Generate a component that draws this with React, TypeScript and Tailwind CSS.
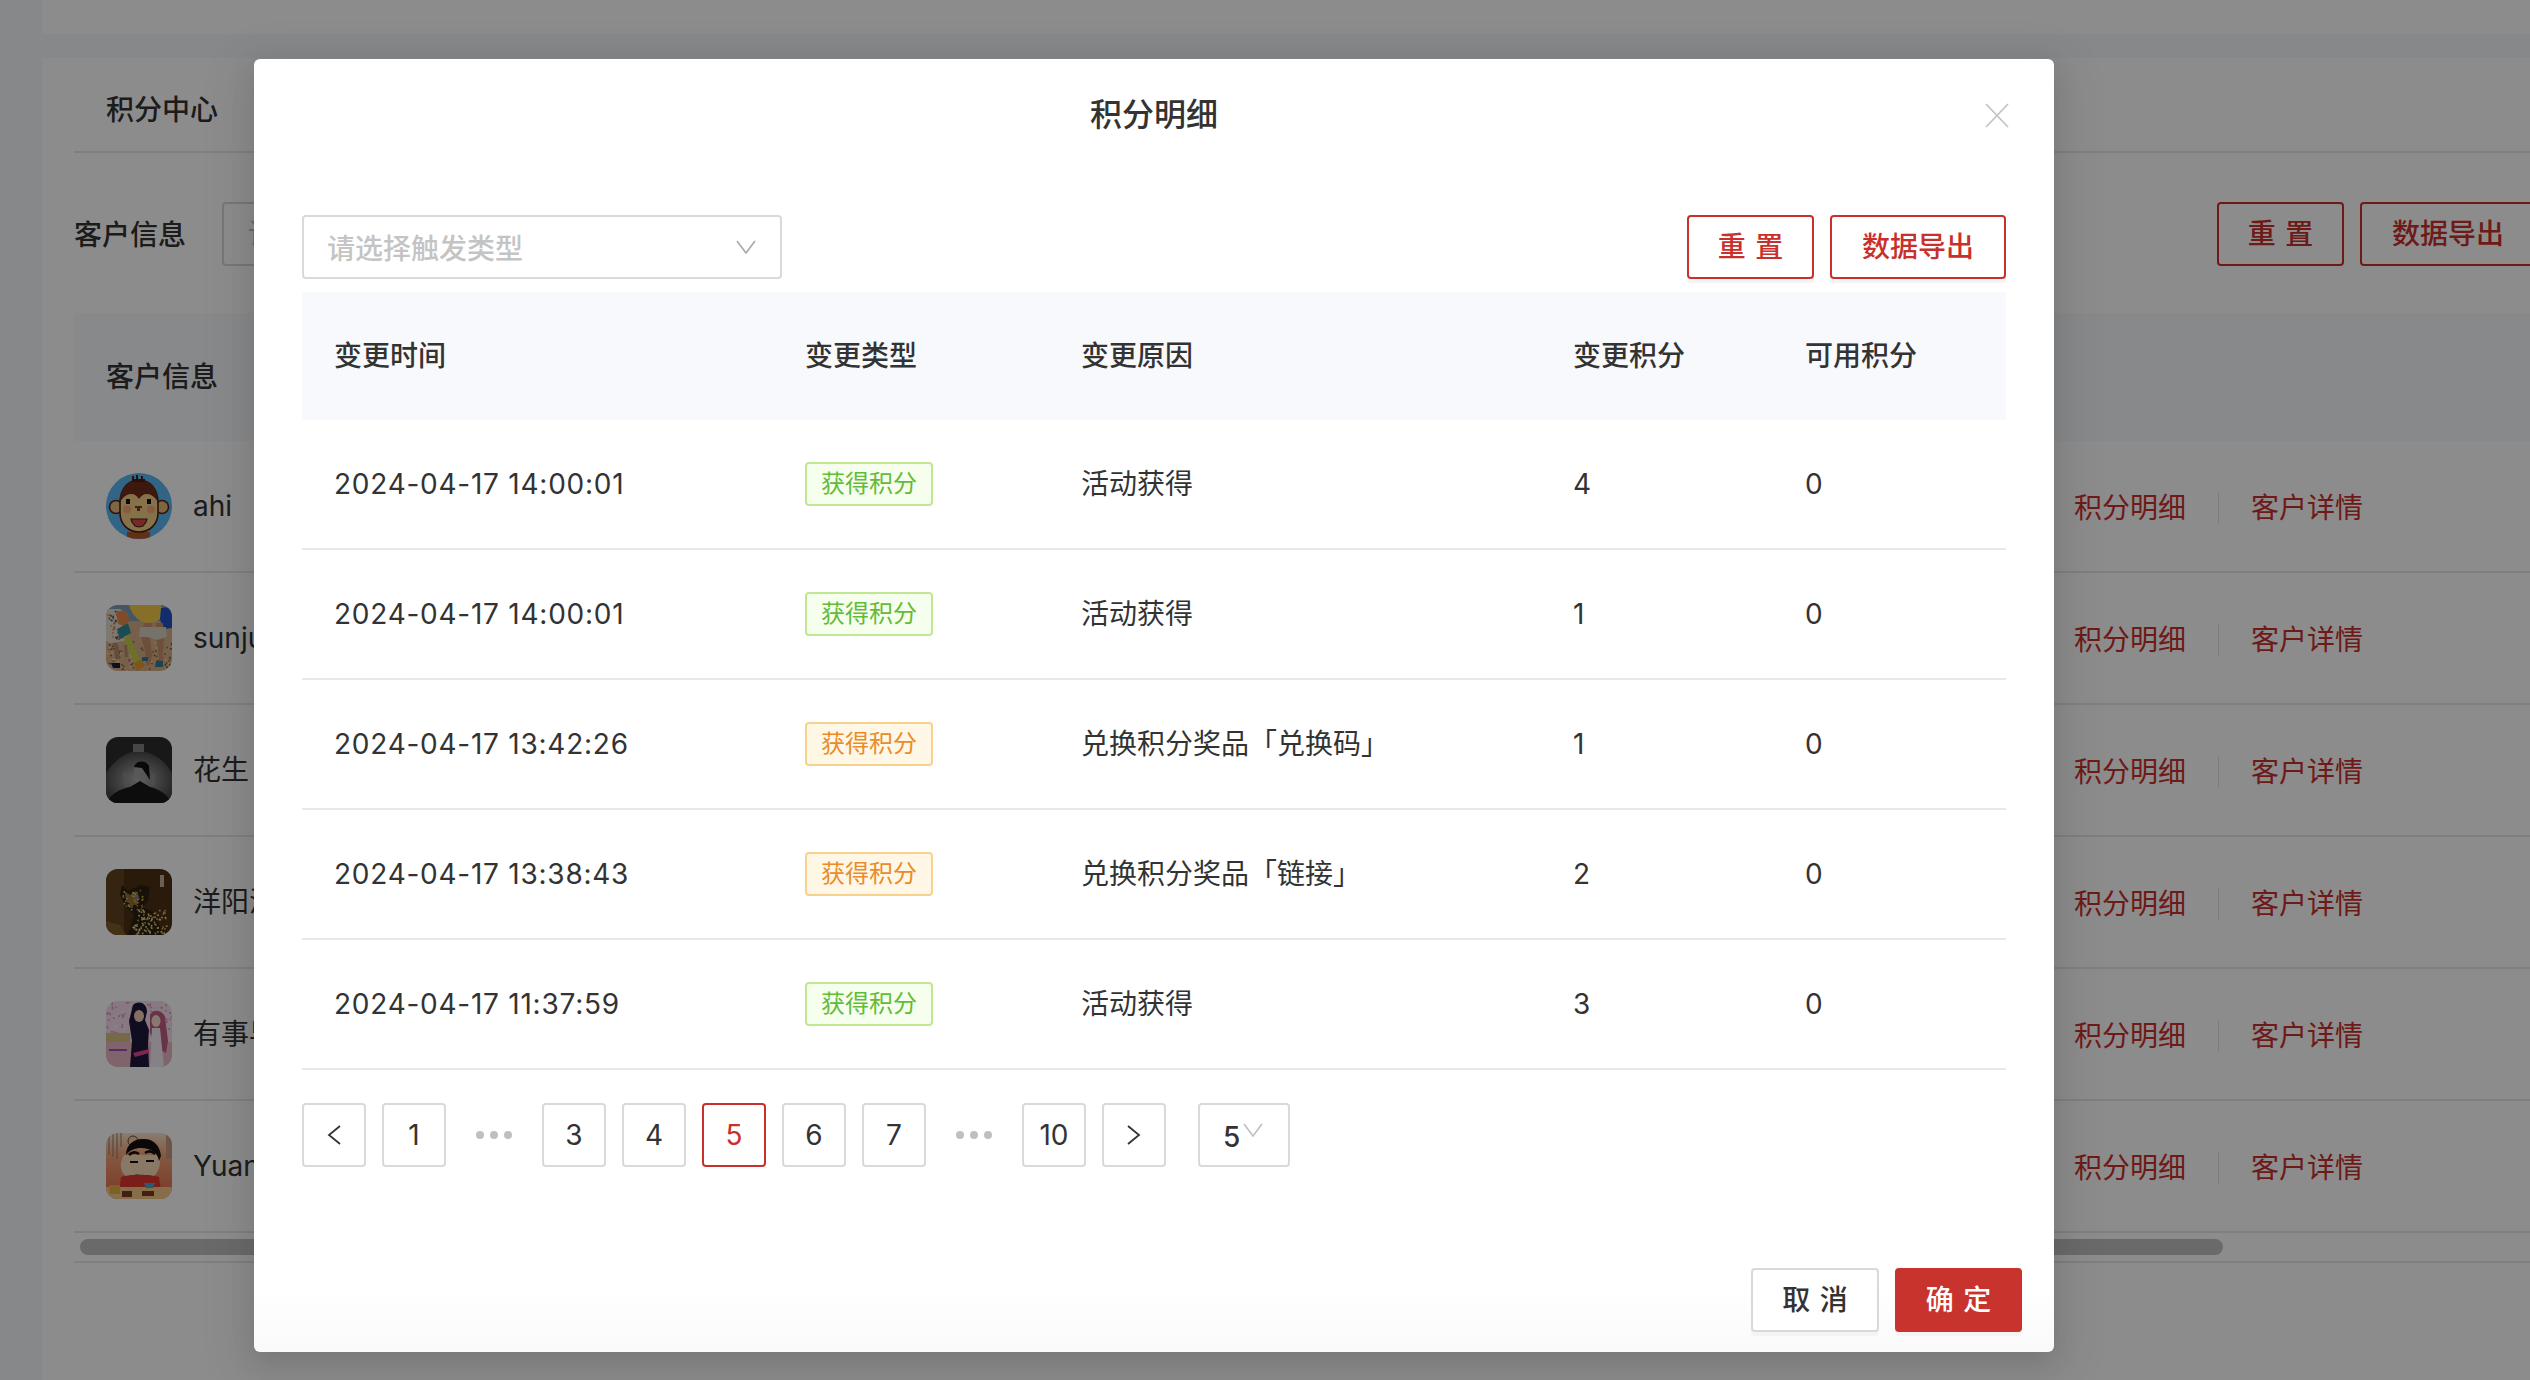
import React from "react";

const font = { fontFamily: 'Inter, "Noto Sans CJK SC", sans-serif' };

function Chevron({ className }: { className: string }) {
  return (
    <svg className={className} viewBox="0 0 20 14" fill="none" stroke="currentColor" strokeWidth="1.6">
      <path d="M1 1l9 12 9-12" />
    </svg>
  );
}

// little flecks of colour so the photo avatars don't read as flat shapes
function Specks({ seed, colors, x, y, w, h, n }: { seed: number; colors: string[]; x: number; y: number; w: number; h: number; n: number }) {
  let s = seed;
  const next = () => {
    s = (s * 9301 + 49297) % 233280;
    return s / 233280;
  };
  const items = Array.from({ length: n }, (_, i) => ({
    key: i,
    x: x + next() * w,
    y: y + next() * h,
    fill: colors[Math.floor(next() * colors.length)],
  }));
  return (
    <>
      {items.map((p) => (
        <rect key={p.key} x={p.x} y={p.y} width="1.6" height="1.6" fill={p.fill} />
      ))}
    </>
  );
}

function Monkey() {
  return (
    <svg viewBox="0 0 66 66" className="h-[66px] w-[66px] rounded-full">
      <rect width="66" height="66" fill="#5cb6f2" />
      <path d="M21 59h23v7H21z" fill="#b0582a" />
      <circle cx="10" cy="34" r="6.5" fill="#e8b878" stroke="#5c2416" strokeWidth="1.6" />
      <circle cx="56" cy="34" r="6.5" fill="#e8b878" stroke="#5c2416" strokeWidth="1.6" />
      <path d="M14 30c0-14 8-23 19-23s19 9 19 23v10c0 11-8 19-19 19S14 51 14 40z" fill="#f4d088" stroke="#4c1e12" strokeWidth="1.6" />
      <path d="M14 29c0-14 8-22 19-22s19 8 19 22c-3-5-7-8-11-8-4 0-6 2-8 5-2-3-4-5-8-5-4 0-8 3-11 8z" fill="#6e2c1c" />
      <path d="M26 6V3h2v3h2V2h2v4h3V3h2v3h2v3H26z" fill="#4c1e12" />
      <rect x="20" y="26" width="4" height="5" fill="#140e0a" />
      <rect x="41" y="26" width="4" height="5" fill="#140e0a" />
      <circle cx="21" cy="36.5" r="4" fill="#f4a878" />
      <circle cx="45" cy="36.5" r="4" fill="#f4a878" />
      <path d="M29 33h7v2h-2v3h-3v-3h-2z" fill="#7c3c24" />
      <path d="M25 46h16l-1 3-3 4-4 1-4-1-3-4z" fill="#d84c48" stroke="#4c1e12" strokeWidth="1.2" />
    </svg>
  );
}

function Sand() {
  return (
    <svg viewBox="0 0 66 66" className="h-[66px] w-[66px] rounded-[12px]">
      <rect width="66" height="66" fill="#d8b088" />
      <rect width="66" height="16" fill="#7c9cb8" />
      <Specks seed={11} colors={["#8c6844", "#f0d8b8", "#6c5038"]} x={0} y={36} w={66} h={30} n={90} />
      <path d="M23 0h32l3 8c-2 6-8 10-16 10-9 0-16-8-19-18z" fill="#f4cc48" />
      <path d="M55 3l11-1v21l-9 1-3-10z" fill="#2450c8" />
      <path d="M38 18h8l-2 14 2 18-2 10h-4l-1-14-4-14zM50 18h7l1 14-1 18 1 6h-5l-1-12-3-14z" fill="#c89070" />
      <path d="M34 22h26l1 10-10 3-10-3-8 0z" fill="#d8d0c0" />
      <path d="M0 4h14l8 6 1 14-5 12-14 2-4-2z" fill="#e4dccc" />
      <Specks seed={5} colors={["#c05830", "#3c4c68", "#e88a48"]} x={1} y={5} w={20} h={30} n={50} />
      <path d="M10 6h10l4 10-6 5-6-2z" fill="#e88a48" />
      <path d="M11 24l11-6 3 10-11 6z" fill="#2c8c98" />
      <path d="M18 33l5-2 12 27-5 3z" fill="#c4d040" />
      <path d="M28 58l8-4 3 7-8 5z" fill="#e89c30" />
      <path d="M8 38h4l2 16H9zM18 40h3l1 12h-3z" fill="#b48c68" />
      <path d="M5 58h9v5H7z" fill="#141c3c" />
      <path d="M50 56h7v6h-8z" fill="#2c7c9c" />
      <path d="M36 52h6v4h-6z" fill="#2c7c9c" />
    </svg>
  );
}

function Mono() {
  return (
    <svg viewBox="0 0 66 66" className="h-[66px] w-[66px] rounded-[12px]">
      <defs>
        <radialGradient id="dome" cx="50%" cy="55%" r="60%">
          <stop offset="0" stopColor="#b0b0b0" />
          <stop offset="1" stopColor="#3c3c3c" />
        </radialGradient>
      </defs>
      <rect width="66" height="66" fill="#2c2c2c" />
      <path d="M0 36C10 21 22 14 33 14s24 7 33 22v30H0z" fill="url(#dome)" />
      <rect x="27" y="7" width="11" height="8" fill="#808080" />
      <path d="M0 66c6-10 14-14 24-16l10-6 10 6c8 2 16 6 22 16z" fill="#181818" />
      <ellipse cx="35" cy="35" rx="7" ry="9" fill="#a0a0a0" />
      <path d="M28 30c2-7 12-7 15-1l1 14-8-12z" fill="#121212" />
      <path d="M17 36l3-1 2 14-3 2zM46 36l3 2-1 12-3-2z" fill="#8c8c8c" />
    </svg>
  );
}

function Rat() {
  return (
    <svg viewBox="0 0 66 66" className="h-[66px] w-[66px] rounded-[12px]">
      <rect width="66" height="66" fill="#4c3016" />
      <rect width="18" height="66" fill="#6c4a20" opacity=".7" />
      <path d="M16 16l6 6 12-6 10 2-2 14-6 6 10 4 12 24H22l6-20-8-8-6-12z" fill="#2a2010" />
      <path d="M18 22l6 4 6-4 4 8-8 8-6-8z" fill="#8c7038" />
      <Specks seed={23} colors={["#e8c878", "#c8a050", "#f0dc98"]} x={26} y={40} w={34} h={26} n={90} />
      <Specks seed={41} colors={["#a88848", "#d8b868"]} x={16} y={18} w={22} h={22} n={40} />
      <circle cx="31" cy="27" r="1.6" fill="#4c90e0" />
      <rect x="54" y="6" width="4" height="12" fill="#d8d0b8" opacity=".8" />
      <path d="M0 66V52l14 4 6 10z" fill="#7c5a28" />
    </svg>
  );
}

function Couple() {
  return (
    <svg viewBox="0 0 66 66" className="h-[66px] w-[66px] rounded-[12px]">
      <rect width="66" height="66" fill="#f4dcec" />
      <Specks seed={7} colors={["#e098c8", "#d880b8", "#fff0f8"]} x={0} y={0} w={66} h={34} n={90} />
      <rect y="32" width="24" height="9" fill="#d8c088" />
      <rect y="41" width="66" height="25" fill="#e8b8c4" />
      <path d="M27 4c6-5 14-2 14 7l-2 8 4 10-1 14 1 23H24l2-26-3-20z" fill="#20183c" />
      <ellipse cx="33" cy="15" rx="5" ry="6" fill="#f0ccb4" />
      <path d="M27 52l16-4v4l-14 4z" fill="#e84898" />
      <path d="M44 14c2-6 12-6 15 2l3 24-2 12-8-4-8-16z" fill="#c05c80" />
      <ellipse cx="50" cy="20" rx="4.5" ry="6" fill="#f8dccc" />
      <path d="M46 27h8l4 39H44z" fill="#f4ecf4" />
      <path d="M3 48h18v2H3z" fill="#a848b8" />
    </svg>
  );
}

function Shin() {
  return (
    <svg viewBox="0 0 66 66" className="h-[66px] w-[66px] rounded-[12px]">
      <defs>
        <linearGradient id="wall" x1="0" y1="0" x2="0" y2="1">
          <stop offset="0" stopColor="#f8e4cc" />
          <stop offset=".35" stopColor="#f0a078" />
          <stop offset="1" stopColor="#e06844" />
        </linearGradient>
      </defs>
      <rect width="66" height="66" fill="url(#wall)" />
      <path d="M3 0v22M7 0v24M11 0v26M15 0v14" stroke="#907868" strokeWidth="1" />
      <path d="M60 0h6v26h-6z" fill="#c89880" />
      <circle cx="27" cy="8" r="5" fill="#f4cca4" stroke="#3c2c20" strokeWidth=".8" />
      <path d="M18 22c-5 8-4 17 2 21 8 4 22 4 29-1 4-4 6-12 5-20z" fill="#f8dcbc" />
      <path d="M20 22c0-12 10-17 18-16 9 0 16 6 17 17l-2 5c-1-8-8-13-18-13-6 0-11 2-15 7z" fill="#14100e" />
      <path d="M23 22c3-3 7-3 10-1M39 20c3-2 7-2 10 1" stroke="#14100e" strokeWidth="2.6" fill="none" />
      <path d="M24 29h8M40 28h8" stroke="#14100e" strokeWidth="1.8" />
      <path d="M29 42h4" stroke="#5c4030" strokeWidth="1" />
      <path d="M15 44c8-3 30-3 38 0l2 14H13z" fill="#e03830" />
      <path d="M0 54h66v12H0z" fill="#f4c888" />
      <path d="M38 50h11l-2 5h-7z" fill="#4ca4d8" />
      <path d="M3 52h11v9H4z" fill="#e4b040" />
      <path d="M16 58h10v6H16zM36 58h12v5H36z" fill="#7c3820" />
    </svg>
  );
}

const rows = [
  { avatar: <Monkey />, name: "ahi" },
  { avatar: <Sand />, name: "sunjun" },
  { avatar: <Mono />, name: "花生" },
  { avatar: <Rat />, name: "洋阳洋" },
  { avatar: <Couple />, name: "有事早" },
  { avatar: <Shin />, name: "Yuan" },
];

const records = [
  { time: "2024-04-17 14:00:01", earn: true, reason: "活动获得", change: "4" },
  { time: "2024-04-17 14:00:01", earn: true, reason: "活动获得", change: "1" },
  { time: "2024-04-17 13:42:26", earn: false, reason: "兑换积分奖品「兑换码」", change: "1" },
  { time: "2024-04-17 13:38:43", earn: false, reason: "兑换积分奖品「链接」", change: "2" },
  { time: "2024-04-17 11:37:59", earn: true, reason: "活动获得", change: "3" },
];

const cols = "grid grid-cols-[471px_276px_492px_232px_233px] items-center";

function PageBtn({ children, active }: { children: React.ReactNode; active?: boolean }) {
  return (
    <button
      className={
        active
          ? "flex h-16 w-16 items-center justify-center rounded-[4px] border-2 border-[#c9302c] text-[28px] text-[#c9302c]"
          : "flex h-16 w-16 items-center justify-center rounded-[4px] border-2 border-[#d9d9d9] text-[28px] text-[#333]"
      }
    >
      {children}
    </button>
  );
}

function Dots() {
  return (
    <div className="flex h-16 w-16 items-center justify-center gap-[6px]">
      <span className="h-2 w-2 rounded-full bg-[#bfbfbf]" />
      <span className="h-2 w-2 rounded-full bg-[#bfbfbf]" />
      <span className="h-2 w-2 rounded-full bg-[#bfbfbf]" />
    </div>
  );
}

export default function App() {
  return (
    <div className="relative h-[1380px] w-[2530px] overflow-hidden bg-[#f5f7fa] text-[#333]" style={font}>
      {/* page behind the modal */}
      <div className="ml-[42px] h-[34px] bg-white" />
      <div className="ml-[42px] mt-[24px] h-[1322px] bg-white pl-8">
        <div className="flex h-[95px] items-center border-b-2 border-[#e8e8e8] pl-8 pt-[11px] text-[28px] font-medium">
          积分中心
        </div>
        <div className="flex h-[160px] items-center justify-between pt-[2px]">
          <div className="flex items-center">
            <span className="w-[148px] pt-[1px] text-[28px] font-medium">客户信息</span>
            <div className="flex h-16 w-[420px] items-center rounded-[4px] border-2 border-[#d9d9d9] pl-6 text-[28px] text-[#bfbfbf]">
              请输入
            </div>
          </div>
          <div className="-mr-[6px] flex gap-4">
            <button className="h-16 w-[127px] rounded-[4px] border-2 border-[#c9302c] text-[28px] font-medium tracking-[.34em] text-[#c9302c]">
              <span className="-mr-[.34em]">重置</span>
            </button>
            <button className="h-16 w-[176px] rounded-[4px] border-2 border-[#c9302c] text-[28px] font-medium text-[#c9302c]">
              数据导出
            </button>
          </div>
        </div>
        <div className="flex h-[128px] items-center bg-[#f8f9fc] pl-8 text-[28px] font-medium">客户信息</div>
        {rows.map((row) => (
          <div key={row.name} className="flex h-[132px] items-center border-b-2 border-[#e8e8e8] pl-8 text-[28px]">
            <div className="flex w-[1968px] items-center gap-[21px]">
              {row.avatar}
              <span>{row.name}</span>
            </div>
            <div className="flex items-center pt-[3px] text-[#c9302c]">
              <span>积分明细</span>
              <span className="mx-[32px] h-8 w-[1px] bg-[#e0e0e0]" />
              <span>客户详情</span>
            </div>
          </div>
        ))}
        <div className="flex h-[30px] items-center border-b-2 border-[#e8e8e8] pl-[6px]">
          <div className="h-4 w-[2143px] rounded-full bg-[#c1c1c1]" />
        </div>
      </div>

      {/* dimmed layer */}
      <div className="absolute inset-0 bg-black/45" />

      {/* modal */}
      <div className="absolute left-[254px] top-[59px] h-[1293px] w-[1800px] rounded-[6px] bg-gradient-to-b from-white from-[95%] to-[#fafafa] px-12 pb-5 shadow-[0_12px_48px_16px_rgba(0,0,0,0.06),0_9px_28px_rgba(0,0,0,0.1)]">
        <div className="h-[156px] pt-[34px] text-center text-[32px] font-medium leading-[44px]">积分明细</div>
        <svg className="absolute right-[45px] top-[44px] h-[25px] w-[24px] text-[#c4c4c4]" viewBox="0 0 24 25" fill="none" stroke="currentColor" strokeWidth="1.8">
          <path d="M1 1l22 23M23 1L1 24" />
        </svg>

        <div className="flex justify-between">
          <div className="flex h-16 w-[480px] items-center justify-between rounded-[4px] border-2 border-[#d9d9d9] pl-[23px] pr-[24px] text-[28px] font-medium text-[#c4c4c4]">
            <span className="pt-1">请选择触发类型</span>
            <Chevron className="h-[14px] w-5 text-[#a8a8a8]" />
          </div>
          <div className="flex gap-4">
            <button className="h-16 w-[127px] rounded-[4px] border-2 border-[#c9302c] text-[28px] font-medium tracking-[.34em] text-[#c9302c] shadow-[0_4px_0_#f4f4f4]">
              <span className="-mr-[.34em]">重置</span>
            </button>
            <button className="h-16 w-[176px] rounded-[4px] border-2 border-[#c9302c] text-[28px] font-medium text-[#c9302c] shadow-[0_4px_0_#f4f4f4]">
              数据导出
            </button>
          </div>
        </div>

        <div className="mt-[13px] text-[28px]">
          <div className={`${cols} h-[128px] rounded-t-[4px] bg-[#f8f9fd] font-medium`}>
            <div className="pl-8">变更时间</div>
            <div className="pl-8">变更类型</div>
            <div className="pl-8">变更原因</div>
            <div className="pl-8">变更积分</div>
            <div className="pl-8">可用积分</div>
          </div>
          {records.map((r, i) => (
            <div key={i} className={`${cols} h-[130px] border-b-2 border-[#e8e8e8]`}>
              <div className="pl-8 tracking-[0.75px]">{r.time}</div>
              <div className="pl-8">
                <span
                  className={
                    r.earn
                      ? "flex h-[44px] w-[128px] items-center justify-center rounded-[4px] border-2 border-[#c0e892] bg-[#f6ffed] text-[24px] text-[#63bb3a]"
                      : "flex h-[44px] w-[128px] items-center justify-center rounded-[4px] border-2 border-[#f8d28c] bg-[#fff7e6] text-[24px] text-[#ea8c2c]"
                  }
                >
                  获得积分
                </span>
              </div>
              <div className="pl-8">{r.reason}</div>
              <div className="pl-8">{r.change}</div>
              <div className="pl-8">0</div>
            </div>
          ))}
        </div>

        <div className="mt-[33px] flex items-center gap-4">
          <PageBtn>
            <svg className="h-5 w-[14px]" viewBox="0 0 14 20" fill="none" stroke="currentColor" strokeWidth="1.8">
              <path d="M13 1L2 10l11 9" />
            </svg>
          </PageBtn>
          <PageBtn>1</PageBtn>
          <Dots />
          <PageBtn>3</PageBtn>
          <PageBtn>4</PageBtn>
          <PageBtn active>5</PageBtn>
          <PageBtn>6</PageBtn>
          <PageBtn>7</PageBtn>
          <Dots />
          <PageBtn>10</PageBtn>
          <PageBtn>
            <svg className="h-5 w-[14px]" viewBox="0 0 14 20" fill="none" stroke="currentColor" strokeWidth="1.8">
              <path d="M1 1l11 9-11 9" />
            </svg>
          </PageBtn>
          <div className="ml-4 flex h-16 w-[92px] items-center rounded-[4px] border-2 border-[#d9d9d9] pl-[23px] text-[28px]">
            <span className="pt-1 font-medium">5</span>
            <Chevron className="-mt-[10px] ml-[3px] h-[14px] w-5 text-[#bfbfbf]" />
          </div>
        </div>

        <div className="-mr-4 mt-[101px] flex justify-end gap-4">
          <button className="h-16 w-[128px] rounded-[4px] border-2 border-[#d9d9d9] bg-white text-[28px] font-medium tracking-[.34em] shadow-[0_4px_0_#f4f4f4]">
            <span className="-mr-[.34em]">取消</span>
          </button>
          <button className="h-16 w-[127px] rounded-[4px] bg-[#c9332d] text-[28px] font-medium tracking-[.34em] text-white shadow-[0_4px_0_#f4f4f4]">
            <span className="-mr-[.34em]">确定</span>
          </button>
        </div>
      </div>
    </div>
  );
}
